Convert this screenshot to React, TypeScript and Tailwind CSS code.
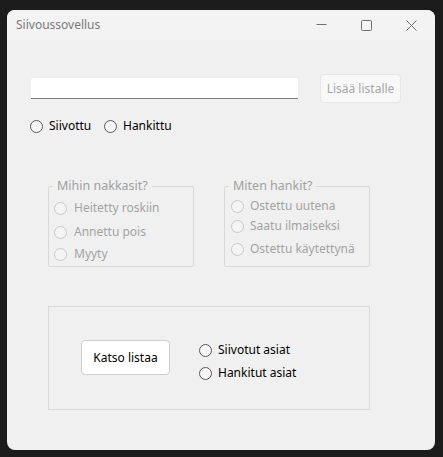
import React from "react";

const font = { fontFamily: '"Noto Sans", "Open Sans", sans-serif' };

function Radio({ label, disabled, gap = "gap-[6px]" }: { label: string; disabled?: boolean; gap?: string }) {
  return (
    <div className={`flex items-center h-[16px] ${gap}`}>
      <span
        className={
          disabled
            ? "w-[13px] h-[13px] rounded-full border border-[#c8c8c8] bg-[#f4f4f4] shrink-0"
            : "w-[13px] h-[13px] rounded-full border border-[#5a5a5a] bg-[#f6f6f6] shrink-0"
        }
      />
      <span className={disabled ? "text-[12px] leading-[16px] text-[#a3a3a3] whitespace-nowrap" : "text-[12px] leading-[16px] text-black whitespace-nowrap"}>
        {label}
      </span>
    </div>
  );
}

export default function App() {
  return (
    <div className="w-[443px] h-[457px] bg-[#1c1c1c] pl-[7px] pt-[10px]" style={font}>
      <div className="w-[428px] h-[440px] rounded-[8px] bg-[#f0f0f0] overflow-hidden flex flex-col">
        {/* title bar */}
        <div className="h-[30px] bg-[#f3f3f3] flex items-center shrink-0">
          <span className="pl-[9px] text-[12px] text-[#7a7a7a]">Siivoussovellus</span>
          <div className="ml-auto flex pr-[1px]">
            <div className="w-[45px] h-[30px] flex items-center justify-center">
              <svg width="11" height="11" viewBox="0 0 11 11">
                <line x1="0.5" y1="4.5" x2="10.5" y2="4.5" stroke="#6e6e6e" strokeWidth="1" />
              </svg>
            </div>
            <div className="w-[45px] h-[30px] flex items-center justify-center">
              <svg width="11" height="11" viewBox="0 0 11 11">
                <rect x="0.5" y="0.5" width="10" height="10" rx="1" fill="none" stroke="#6e6e6e" strokeWidth="1" />
              </svg>
            </div>
            <div className="w-[45px] h-[30px] flex items-center justify-center">
              <svg width="11" height="11" viewBox="0 0 11 11">
                <path d="M0.5 0.5 L10.5 10.5 M10.5 0.5 L0.5 10.5" stroke="#6e6e6e" strokeWidth="1" fill="none" />
              </svg>
            </div>
          </div>
        </div>

        {/* input row */}
        <div className="flex items-center mt-[34px] pl-[24px] h-[29px]">
          <div className="w-[267px] h-[21px] bg-white rounded-t-[3px] border-b border-[#7a7a7a]" />
          <div className="ml-[22px] w-[81px] h-[29px] rounded-[4px] bg-[#f8f8f8] border border-[#e6e6e6] flex items-center justify-center text-[12px] text-[#a6a6a6]">
            Lisää listalle
          </div>
        </div>

        {/* radios row */}
        <div className="flex mt-[15px] pl-[23px]">
          <div className="w-[74px]">
            <Radio label="Siivottu" />
          </div>
          <Radio label="Hankittu" />
        </div>

        {/* group boxes */}
        <div className="flex mt-[52px] pl-[41px] gap-[30px]">
          <div className="relative w-[146px] h-[81px] border border-[#d9d9d9] rounded-[2px] pl-[5px] pt-[13px]">
            <span className="absolute -top-[9px] left-[4px] px-[4px] bg-[#f0f0f0] text-[12.5px] leading-[16px] text-[#a0a0a0]">
              Mihin nakkasit?
            </span>
            <Radio label="Heitetty roskiin" disabled gap="gap-[7px]" />
            <div className="mt-[8px]">
              <Radio label="Annettu pois" disabled gap="gap-[7px]" />
            </div>
            <div className="mt-[6px]">
              <Radio label="Myyty" disabled gap="gap-[7px]" />
            </div>
          </div>
          <div className="relative w-[146px] h-[81px] border border-[#d9d9d9] rounded-[2px] pl-[6px] pt-[11px]">
            <span className="absolute -top-[9px] left-[4px] px-[4px] bg-[#f0f0f0] text-[12.5px] leading-[16px] text-[#a0a0a0]">
              Miten hankit?
            </span>
            <Radio label="Ostettu uutena" disabled gap="gap-[6px]" />
            <div className="mt-[4px]">
              <Radio label="Saatu ilmaiseksi" disabled gap="gap-[6px]" />
            </div>
            <div className="mt-[7px]">
              <Radio label="Ostettu käytettynä" disabled gap="gap-[6px]" />
            </div>
          </div>
        </div>

        {/* bottom box */}
        <div className="ml-[41px] mt-[39px] w-[322px] h-[104px] border border-[#dadada] flex items-start pl-[32px] pt-[33px]">
          <div className="w-[89px] h-[35px] bg-white border border-[#cfcfcf] rounded-[4px] flex items-center justify-center text-[12px] text-black">
            Katso listaa
          </div>
          <div className="ml-[29px] mt-[2px] flex flex-col gap-[7px]">
            <Radio label="Siivotut asiat" />
            <Radio label="Hankitut asiat" />
          </div>
        </div>
      </div>
    </div>
  );
}
